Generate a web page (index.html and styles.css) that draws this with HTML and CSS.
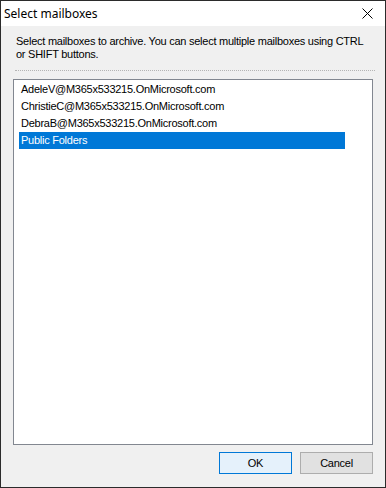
FILE: index.html
```html
<!DOCTYPE html>
<html>
<head>
    <title>Select mailboxes</title>
    <link rel="stylesheet" href="styles.css">
</head>
<body>
    <div class="window">
        <div class="titlebar">
            <span class="title">Select mailboxes</span>
            <svg class="close" width="11" height="11" viewBox="0 0 11 11">
                <path d="M0.5 0.5 L10.5 10.5 M10.5 0.5 L0.5 10.5" stroke="#000" stroke-width="1" fill="none"/>
            </svg>
        </div>
        <div class="content">
            <div class="hint">Select mailboxes to archive. You can select multiple mailboxes using CTRL<br>or SHIFT buttons.</div>
            <div class="separator"></div>
            <div class="listbox">
                <div class="item">AdeleV@M365x533215.OnMicrosoft.com</div>
                <div class="item">ChristieC@M365x533215.OnMicrosoft.com</div>
                <div class="item">DebraB@M365x533215.OnMicrosoft.com</div>
                <div class="item selected">Public Folders</div>
            </div>
            <div class="buttons">
                <div class="button default">OK</div>
                <div class="button">Cancel</div>
            </div>
        </div>
    </div>
</body>
</html>
```

FILE: styles.css
```css
body {
    margin: 0;
    padding: 0;
    width: 386px;
    height: 488px;
    overflow: hidden;
    font-family: "Liberation Sans", Arial, sans-serif;
    font-size: 11px;
    letter-spacing: -0.25px;
    color: #000;
}
.window {
    box-sizing: border-box;
    width: 386px;
    height: 488px;
    border: 1px solid #2b2b2b;
    background: #f0f0f0;
    display: flex;
    flex-direction: column;
}
.titlebar {
    height: 25px;
    background: #fff;
    display: flex;
    align-items: center;
    justify-content: space-between;
    padding: 0 12px 0 3px;
}
.title {
    font-family: "Noto Sans", "Open Sans", sans-serif;
    font-size: 12px;
    letter-spacing: 0;
    margin-top: -1px;
}
.close {
    display: block;
}
.content {
    flex: 1;
    display: flex;
    flex-direction: column;
    padding: 9px 12px 0 12px;
}
.hint {
    padding-left: 3px;
    line-height: 13px;
    white-space: nowrap;
}
.separator {
    margin: 9px 0 0 2px;
    width: 360px;
    height: 0;
    border-top: 1px dotted #b4b4b4;
}
.listbox {
    box-sizing: border-box;
    margin-top: 8px;
    height: 366px;
    background: #fff;
    border: 1px solid #828790;
    padding: 1px 0 0 5px;
}
.item {
    width: 326px;
    height: 17px;
    line-height: 17px;
    padding-left: 2px;
    box-sizing: border-box;
    white-space: nowrap;
}
.item.selected {
    background: #0078d7;
    color: #fff;
}
.buttons {
    display: flex;
    justify-content: flex-end;
    gap: 8px;
    margin-top: 7px;
}
.button {
    box-sizing: border-box;
    width: 73px;
    height: 22px;
    background: #e1e1e1;
    border: 1px solid #adadad;
    display: flex;
    align-items: center;
    justify-content: center;
}
.button.default {
    background: #e5f1fb;
    border-color: #0078d7;
}
```
